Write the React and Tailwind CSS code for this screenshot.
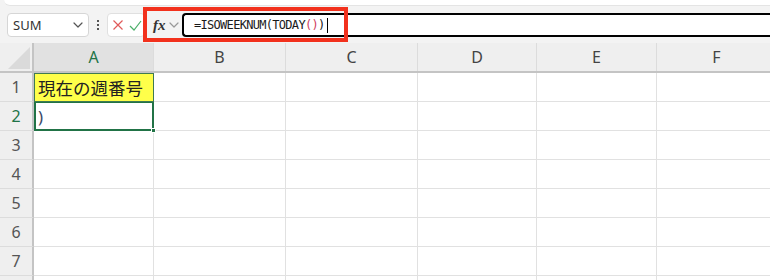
import React from "react";

const cols = ["A", "B", "C", "D", "E", "F"];
const widths = [120, 132, 132, 119, 120, 120];

function Chevron({ className }) {
  return (
    <svg className={className} width="10" height="6" viewBox="0 0 10 6" fill="none">
      <path d="M1 1l4 4 4-4" stroke="currentColor" strokeWidth="1.2" strokeLinecap="round" strokeLinejoin="round" />
    </svg>
  );
}

export default function App() {
  const rows = [1, 2, 3, 4, 5, 6, 7, 8];
  return (
    <div className="relative w-[770px] h-[280px] overflow-hidden bg-[#f3f3f3] font-['Noto_Sans',sans-serif]">
      {/* ribbon bottom */}
      <div className="h-[8px] pl-[4px]">
        <div className="h-[6px] bg-white rounded-bl-[6px] border-b border-[#e4e4e4]" />
      </div>

      {/* formula bar */}
      <div className="flex items-center h-[34px]">
        <div className="ml-[7px] w-[82px] h-[24px] bg-white border border-[#d6d6d6] rounded-[4px] flex items-center justify-between pl-[5px] pr-[5px] shrink-0">
          <span className="text-[13px] text-[#333] leading-none">SUM</span>
          <Chevron className="text-[#555]" />
        </div>
        <div className="w-[18px] flex flex-col items-center gap-[2px] shrink-0">
          <span className="w-[2px] h-[2px] bg-[#555]" />
          <span className="w-[2px] h-[2px] bg-[#555]" />
          <span className="w-[2px] h-[2px] bg-[#555]" />
        </div>
        <div className="w-[38px] h-[24px] bg-white border border-[#e0e0e0] rounded-[4px] flex items-center gap-[5px] pl-[4px] shrink-0">
          <svg width="12" height="12" viewBox="0 0 12 12">
            <path d="M1.5 1.5l9 9M10.5 1.5l-9 9" stroke="#e05a5a" strokeWidth="1.2" />
          </svg>
          <svg width="13" height="11" viewBox="0 0 13 11">
            <path d="M1 6l4 4 7-9" stroke="#4caf6a" strokeWidth="1.2" fill="none" />
          </svg>
        </div>
        <span className="ml-[8px] w-[14px] shrink-0 font-['Liberation_Serif',serif] italic font-semibold text-[15px] text-[#333] leading-none">fx</span>
        <Chevron className="ml-[2px] shrink-0 text-[#999]" />
        <div className="ml-[3px] flex-1 h-[24px] bg-white border-y-2 border-l-2 border-black rounded-l-[4px] flex items-center pl-[10px]">
          <span className="font-['DejaVu_Sans_Mono',monospace] text-[12px] tracking-[-0.7px] text-[#1a1a1a] leading-none">
            =ISOWEEKNUM(TODAY<span className="text-[#d04060]">()</span>)
          </span>
          <span className="ml-[2px] w-[1px] h-[15px] bg-black" />
        </div>
      </div>

      {/* red annotation box */}
      <div className="absolute left-[143px] top-[7px] w-[205px] h-[35px] border-4 border-[#f2311d]" />

      {/* grid */}
      <div className="mt-[1px] bg-white">
        {/* header row */}
        <div className="flex h-[30px] bg-[#efefef] border-b-2 border-[#c4c4c4]">
          <div className="w-[34px] shrink-0 relative border-r-2 border-[#c4c4c4]">
            <svg className="absolute right-[2px] bottom-[2px]" width="22" height="22" viewBox="0 0 22 22">
              <path d="M22 0V22H0Z" fill="#dadada" />
            </svg>
          </div>
          {cols.map((c, i) => (
            <div
              key={c}
              style={{ width: widths[i] }}
              className={`shrink-0 flex items-center justify-center text-[16px] border-r border-[#dcdcdc] ${
                i === 0 ? "bg-[#e1e1e1] text-[#217346]" : "text-[#444]"
              }`}
            >
              {c}
            </div>
          ))}
        </div>
        {rows.map((r) => (
          <div key={r} className="flex h-[29px]">
            <div
              className={`w-[34px] shrink-0 flex items-center justify-center text-[16px] bg-[#efefef] border-r-2 border-b border-b-[#dcdcdc] border-r-[#c4c4c4] ${
                r === 2 ? "text-[#217346]" : "text-[#555]"
              }`}
            >
              {r < 8 ? r : ""}
            </div>
            {cols.map((c, i) => {
              if (i === 0 && r === 1) {
                return (
                  <div
                    key={c}
                    style={{ width: widths[i] }}
                    className="shrink-0 bg-[#ffff4a] border border-[#3f7a52] flex items-center pl-[3px] font-['Noto_Sans_CJK_JP',sans-serif] text-[17.5px] text-[#222] leading-none"
                  >
                    現在の週番号
                  </div>
                );
              }
              if (i === 0 && r === 2) {
                return (
                  <div
                    key={c}
                    style={{ width: widths[i] }}
                    className="relative shrink-0 bg-white border-2 border-t border-[#217346] flex items-center pl-[2px] text-[17px] text-[#3a4a6a] leading-none"
                  >
                    )
                    <span className="absolute right-[-4px] bottom-[-4px] w-[5px] h-[5px] bg-[#217346] border border-white" />
                  </div>
                );
              }
              return (
                <div
                  key={c}
                  style={{ width: widths[i] }}
                  className="shrink-0 border-r border-b border-[#e1e1e1]"
                />
              );
            })}
          </div>
        ))}
      </div>
    </div>
  );
}
